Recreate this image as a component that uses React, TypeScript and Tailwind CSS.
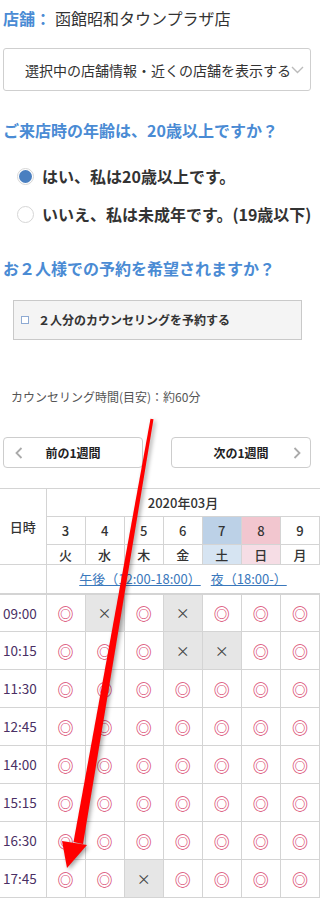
import React from "react";

const days = [
  { d: "3", w: "火", dBg: "", wBg: "" },
  { d: "4", w: "水", dBg: "", wBg: "" },
  { d: "5", w: "木", dBg: "", wBg: "" },
  { d: "6", w: "金", dBg: "", wBg: "" },
  { d: "7", w: "土", dBg: "bg-[#bcd1e7]", wBg: "bg-[#d6e4f2]" },
  { d: "8", w: "日", dBg: "bg-[#f2c6cf]", wBg: "bg-[#f6dde5]" },
  { d: "9", w: "月", dBg: "", wBg: "" },
];

// true = available (◎), false = full (×)
const slots: { time: string; open: boolean[] }[] = [
  { time: "09:00", open: [true, false, true, false, true, true, true] },
  { time: "10:15", open: [true, true, true, false, false, true, true] },
  { time: "11:30", open: [true, true, true, true, true, true, true] },
  { time: "12:45", open: [true, true, true, true, true, true, true] },
  { time: "14:00", open: [true, true, true, true, true, true, true] },
  { time: "15:15", open: [true, true, true, true, true, true, true] },
  { time: "16:30", open: [true, true, true, true, true, true, true] },
  { time: "17:45", open: [true, true, false, true, true, true, true] },
];

function Radio({ checked, label }: { checked: boolean; label: string }) {
  return (
    <div className="flex h-[38px] items-center gap-[8px]">
      <span
        className={
          checked
            ? "flex h-[17px] w-[17px] shrink-0 items-center justify-center rounded-full border border-[#d6d6d6] bg-white"
            : "h-[17px] w-[17px] shrink-0 rounded-full border border-[#d6d6d6] bg-white"
        }
      >
        {checked && <span className="h-[13px] w-[13px] rounded-full bg-[#4a7fc0]" />}
      </span>
      <span className="whitespace-nowrap text-[16px] font-bold leading-[24px] text-[#333]">{label}</span>
    </div>
  );
}

function Chevron({ dir }: { dir: "left" | "right" }) {
  return (
    <svg width="8" height="12" viewBox="0 0 8 12" fill="none" stroke="#aaaaaa" strokeWidth="1.8">
      {dir === "left" ? <path d="M6.5 1 L1.5 6 L6.5 11" /> : <path d="M1.5 1 L6.5 6 L1.5 11" />}
    </svg>
  );
}

export default function App() {
  return (
    <div
      className="relative w-[320px] h-[899px] overflow-hidden bg-white text-[#333]"
      style={{ fontFamily: '"Noto Sans CJK JP", "Noto Sans", sans-serif' }}
    >
      <div className="px-[3px]">
        <p className="pt-[6px] text-[16px] leading-[24px]">
          <span className="font-bold text-[#4a8bd4]">店舗：</span>
          <span className="ml-[4px] text-[#333]">函館昭和タウンプラザ店</span>
        </p>

        <div className="mt-[18px] flex h-[43px] w-[308px] items-center rounded-[3px] border border-[#cfcfcf] pl-[21px] pr-[8px]">
          <span className="whitespace-nowrap text-[14px] leading-[20px] text-[#333]">
            選択中の店舗情報・近くの店舗を表示する
          </span>
          <svg className="ml-auto shrink-0" width="13" height="8" viewBox="0 0 13 8" fill="none" stroke="#bbbbbb" strokeWidth="1.4">
            <path d="M1 1 L6.5 6.5 L12 1" />
          </svg>
        </div>

        <h2 className="mt-[27px] whitespace-nowrap text-[16px] font-bold leading-[24px] text-[#4a8bd4]">
          ご来店時の年齢は、20歳以上ですか？
        </h2>

        <div className="mt-[15px] pl-[14px]">
          <Radio checked label="はい、私は20歳以上です。" />
          <Radio checked={false} label="いいえ、私は未成年です。(19歳以下)" />
        </div>

        <h2 className="mt-[23px] whitespace-nowrap text-[16px] font-bold leading-[24px] text-[#4a8bd4]">
          お２人様での予約を希望されますか？
        </h2>

        <div className="ml-[10px] mt-[20px] flex h-[40px] w-[289px] items-center border border-[#c9c9c9] bg-[#f4f4f4] pl-[7px]">
          <span className="h-[8px] w-[8px] shrink-0 border border-[#8eaad3] bg-white" />
          <span className="ml-[9px] text-[12px] font-bold leading-[18px] text-[#333]">
            ２人分のカウンセリングを予約する
          </span>
        </div>

        <p className="mt-[48px] pl-[8px] text-[12px] leading-[18px] text-[#555]">
          カウンセリング時間(目安)：約60分
        </p>

        <div className="mt-[31px] flex w-[308px] justify-between">
          <button className="relative flex h-[31px] w-[140px] items-center justify-center rounded-[4px] border border-[#cdcdcd] bg-white">
            <span className="absolute left-[11px] top-[9px]">
              <Chevron dir="left" />
            </span>
            <span className="text-[12px] font-bold text-[#222]">前の1週間</span>
          </button>
          <button className="relative flex h-[31px] w-[140px] items-center justify-center rounded-[4px] border border-[#cdcdcd] bg-white">
            <span className="text-[12px] font-bold text-[#222]">次の1週間</span>
            <span className="absolute right-[9px] top-[9px]">
              <Chevron dir="right" />
            </span>
          </button>
        </div>
      </div>

      <table className="mt-[20px] w-[320px] table-fixed border-collapse text-[13px]">
        <colgroup>
          <col className="w-[46px]" />
          {days.map((d) => (
            <col key={d.d} />
          ))}
        </colgroup>
        <thead>
          <tr className="h-[28px]">
            <th rowSpan={3} className="border-b border-r border-t border-[#d4d4d4] text-[13px] font-medium text-[#333]">
              日時
            </th>
            <th colSpan={7} className="border-b border-t border-[#d4d4d4] text-[13px] font-medium text-[#333]">
              2020年03月
            </th>
          </tr>
          <tr className="h-[28px]">
            {days.map((d) => (
              <th key={d.d} className={`border-b border-r border-[#d4d4d4] font-medium text-[#333] ${d.dBg}`}>
                {d.d}
              </th>
            ))}
          </tr>
          <tr className="h-[20px]">
            {days.map((d) => (
              <th key={d.w} className={`border-b border-r border-[#d4d4d4] font-medium leading-[18px] text-[#333] ${d.wBg}`}>
                {d.w}
              </th>
            ))}
          </tr>
          <tr className="h-[29px]">
            <td className="border-b-2 border-r border-[#d4d4d4]" />
            <td colSpan={7} className="border-b-2 border-[#d4d4d4] text-center">
              <a className="text-[13px] text-[#3a78bc] underline">午後（12:00-18:00）</a>
              <a className="ml-[10px] text-[13px] text-[#3a78bc] underline">夜（18:00-）</a>
            </td>
          </tr>
        </thead>
        <tbody>
          {slots.map((s) => (
            <tr key={s.time} className="h-[38px]">
              <td className="border-b border-r border-[#d4d4d4] pl-[3px] text-[13.5px] text-[#4a2f64]">{s.time}</td>
              {s.open.map((o, i) => (
                <td
                  key={i}
                  className={
                    o
                      ? "border-b border-r border-[#d4d4d4] text-center text-[16px] font-bold text-[#d8436c]"
                      : "border-b border-r border-[#d4d4d4] bg-[#e6e6e6] text-center text-[14px] text-[#444]"
                  }
                >
                  {o ? "◎" : "×"}
                </td>
              ))}
            </tr>
          ))}
        </tbody>
      </table>

      {/* red annotation arrow */}
      <svg
        className="pointer-events-none absolute left-0 top-0"
        width="320"
        height="899"
        viewBox="0 0 320 899"
        style={{ filter: "drop-shadow(2px 2px 2px rgba(0,0,0,0.35))" }}
      >
        <polygon points="153.5,419.3 150.5,418.7 73.5,842 83,844" fill="#ff0000" />
        <polygon points="62,841 87,845 67,868" fill="#ff0000" />
      </svg>
    </div>
  );
}
